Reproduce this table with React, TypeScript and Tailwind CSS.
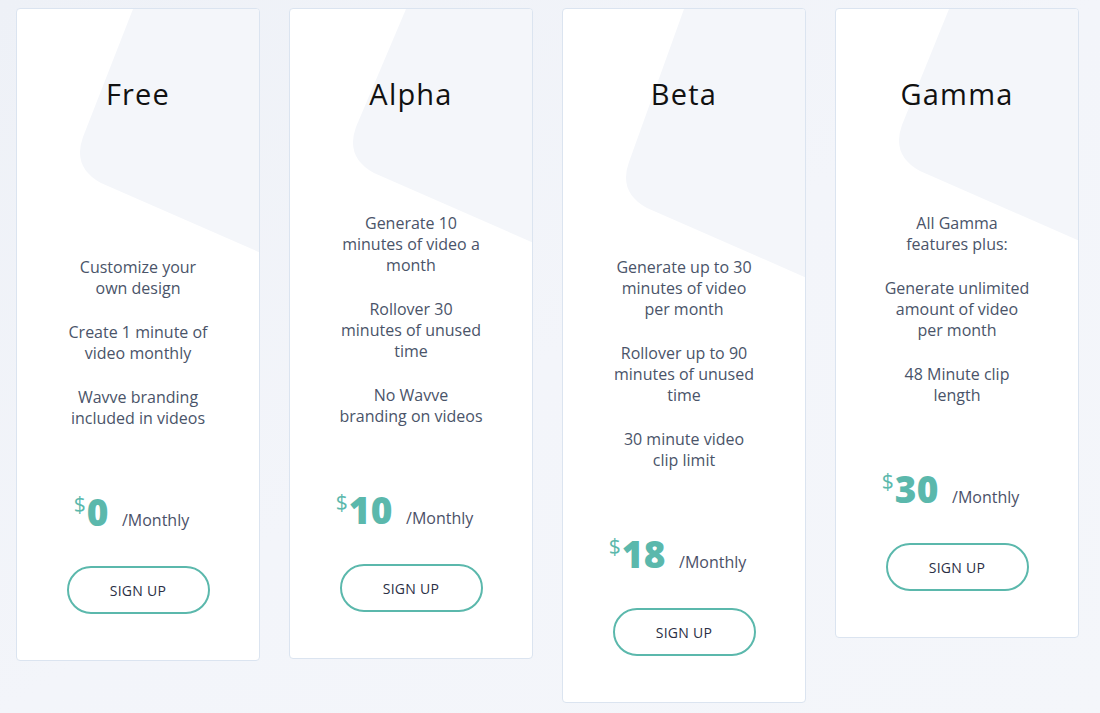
import React from 'react';

type Plan = {
  name: string;
  price: string;
  lead: boolean; // extra blank line above the features
  dy: number; // vertical shift of the card's background shape
  topX: number;
  paras: string[][];
};

const plans: Plan[] = [
  {
    name: 'Free',
    price: '0',
    lead: true,
    dy: 0,
    topX: 116,
    paras: [
      ['Customize your', 'own design'],
      ['Create 1 minute of', 'video monthly'],
      ['Wavve branding', 'included in videos'],
    ],
  },
  {
    name: 'Alpha',
    price: '10',
    lead: false,
    dy: -10,
    topX: 116,
    paras: [
      ['Generate 10', 'minutes of video a', 'month'],
      ['Rollover 30', 'minutes of unused', 'time'],
      ['No Wavve', 'branding on videos'],
    ],
  },
  {
    name: 'Beta',
    price: '18',
    lead: true,
    dy: 25,
    topX: 121,
    paras: [
      ['Generate up to 30', 'minutes of video', 'per month'],
      ['Rollover up to 90', 'minutes of unused', 'time'],
      ['30 minute video', 'clip limit'],
    ],
  },
  {
    name: 'Gamma',
    price: '30',
    lead: false,
    dy: -12,
    topX: 113,
    paras: [
      ['All Gamma', 'features plus:'],
      ['Generate unlimited', 'amount of video', 'per month'],
      ['48 Minute clip', 'length'],
    ],
  },
];

const CardShape: React.FC<{ dy: number; topX: number }> = ({ dy, topX }) => {
  const d = `M${topX},0 L66,${128 + dy} Q55,${158 + dy} 84,${174 + dy} L244,${244 + dy} L244,0 Z`;
  return (
    <svg className="absolute left-0 top-0" width="244" height="320" viewBox="0 0 244 320">
      <path d={d} fill="#f4f6fa" />
    </svg>
  );
};

const PlanCard: React.FC<{ plan: Plan }> = ({ plan }) => {
  return (
    <div className="relative w-[244px] shrink-0 overflow-hidden rounded-[4px] border border-[#dbe4f0] bg-white">
      <CardShape dy={plan.dy} topX={plan.topX} />
      <div className="relative flex flex-col items-center pt-[67px] pb-[46px]">
        <h3 className="h-[36px] text-[29px] font-medium leading-[36px] tracking-[1.2px] text-[#111111]">
          {plan.name}
        </h3>

        {/* Features */}
        <div className="mt-[101px] flex flex-col gap-[23px] text-center text-[16px] leading-[21px] text-[#4a5469]">
          {plan.lead && <p className="h-[21px]"></p>}
          {plan.paras.map((lines, i) => (
            <p key={i} className="whitespace-nowrap">
              {lines.map((line, j) => (
                <span key={j} className="block">
                  {line}
                </span>
              ))}
            </p>
          ))}
        </div>

        {/* Price */}
        <div className="mt-[63px] flex h-[40px] items-baseline pr-[13px] text-[#5bb8ac]">
          <span className="relative -top-[14px] text-[21px] font-medium leading-none">$</span>
          <span className="ml-[1px] text-[37px] font-extrabold leading-[40px] tracking-[0.5px]">{plan.price}</span>
          <span className="ml-[13px] text-[16px] text-[#4b5168]">/Monthly</span>
        </div>

        <button className="mt-[34px] h-[48px] w-[143px] rounded-full border-2 border-[#5bb8ac] bg-white text-[14px] font-medium tracking-[0.3px] text-[#2a2f45]">
          SIGN UP
        </button>
      </div>
    </div>
  );
};

export default function App() {
  return (
    <div
      className="min-h-[713px] w-full bg-gradient-to-br from-[#eef1f7] via-[#f3f5fa] to-[#f4f6fa]"
      style={{ fontFamily: '"Open Sans", "Noto Sans", sans-serif' }}
    >
      <div className="flex items-start gap-[29px] pl-4 pt-2">
        {plans.map((plan) => (
          <PlanCard key={plan.name} plan={plan} />
        ))}
      </div>
    </div>
  );
}
